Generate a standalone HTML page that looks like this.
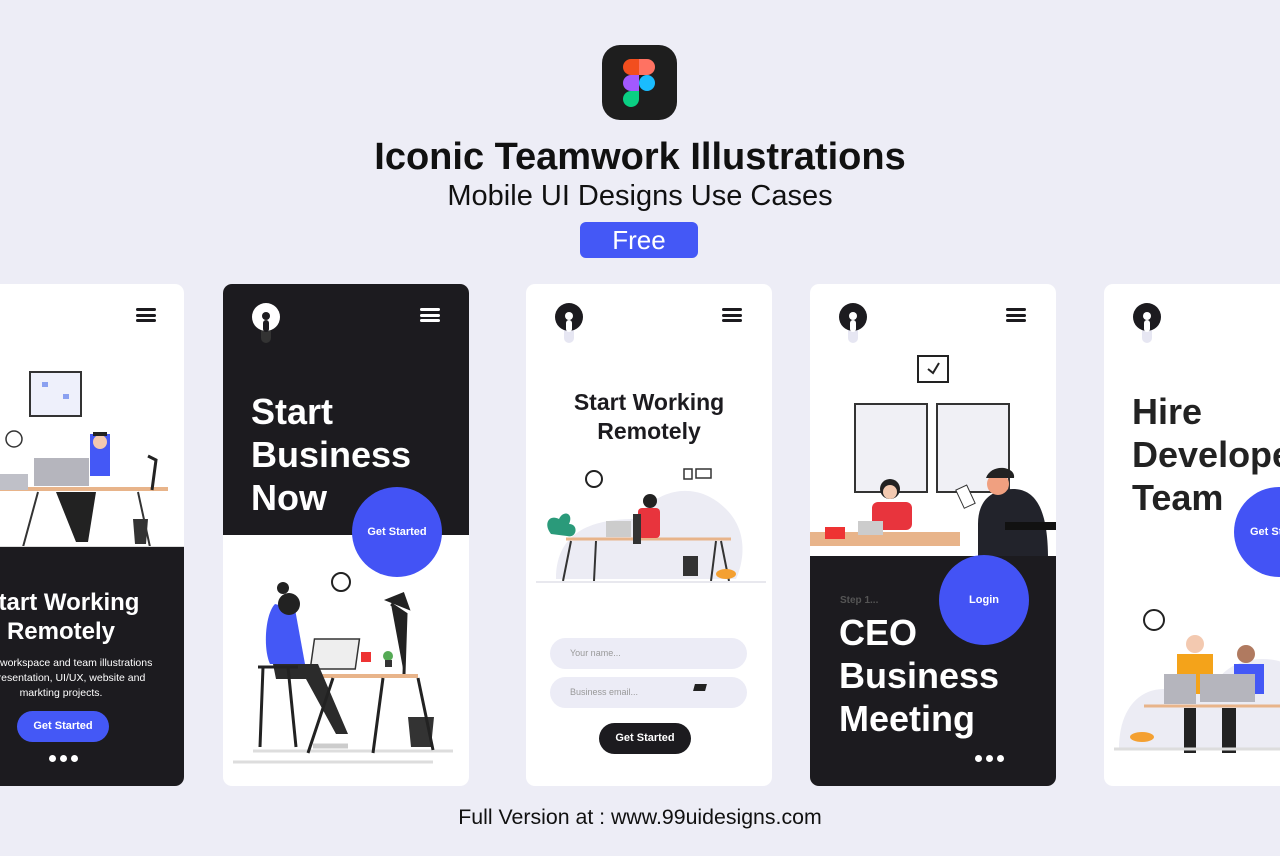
<!DOCTYPE html>
<html><head><meta charset="utf-8"><style>
*{margin:0;padding:0;box-sizing:border-box}
body{width:1280px;height:856px;background:#ededf6;font-family:"Liberation Sans",Arial,sans-serif;position:relative;overflow:hidden}
.abs{position:absolute}
.card{position:absolute;top:284px;width:246px;height:502px;background:#fff;border-radius:9px;overflow:hidden}
.dark{background:#1c1b1f}
.hb{position:absolute;top:24px;width:20px;height:14px}
.hb i{display:block;height:3px;border-radius:2px;margin-bottom:2.5px}
.t{position:absolute;font-weight:700;white-space:nowrap}
.circ{position:absolute;border-radius:50%;background:#4353f5;color:#fff;font-weight:700;font-size:11px;display:flex;align-items:center;justify-content:center}
.dots{position:absolute;display:flex;gap:4px}
.dots i{width:7px;height:7px;border-radius:50%;background:#fff;display:block}
</style></head><body>

<div class="abs" style="left:602px;top:45px;width:75px;height:75px;background:#1e1e1e;border-radius:18px"></div>
<svg class="abs" style="left:622px;top:59px" width="34" height="48" viewBox="0 0 34 48">
<path d="M9 0h8v16H9a8 8 0 0 1 0-16z" fill="#f24e1e"/><path d="M17 0h8a8 8 0 0 1 0 16h-8z" fill="#ff7262"/>
<path d="M9 16h8v16H9a8 8 0 0 1 0-16z" fill="#a259ff"/><circle cx="25" cy="24" r="8" fill="#1abcfe"/>
<path d="M9 32h8v8a8 8 0 1 1-8-8z" fill="#0acf83"/></svg>
<div class="t" style="left:0;width:1280px;text-align:center;top:136px;font-size:38px;color:#111">Iconic Teamwork Illustrations</div>
<div class="abs" style="left:0;width:1280px;text-align:center;top:180px;font-size:29px;color:#111">Mobile UI Designs Use Cases</div>
<div class="abs" style="left:580px;top:222px;width:118px;height:36px;background:#4458f6;border-radius:6px;color:#fff;font-size:26px;text-align:center;line-height:36px">Free</div>
<div class="abs" style="left:0;width:1280px;text-align:center;top:805px;font-size:21.3px;color:#111">Full Version at : www.99uidesigns.com</div>

<!-- card1 -->
<div class="card" style="left:-62px">
 <div class="hb" style="left:198px"><i style="background:#1c1b1f"></i><i style="background:#1c1b1f"></i><i style="background:#1c1b1f"></i></div>
 <svg class="abs" style="left:0;top:80px" width="246" height="190">
  <rect x="92" y="8" width="51" height="44" fill="#eef0fb" stroke="#333" stroke-width="2"/>
  <rect x="104" y="18" width="6" height="5" fill="#8aa0f0"/><rect x="125" y="30" width="6" height="5" fill="#8aa0f0"/>
  <circle cx="76" cy="75" r="8" fill="#fff" stroke="#333" stroke-width="1.5"/>
  <path d="M0 125 h230" stroke="#e8b48a" stroke-width="4"/>
  <rect x="96" y="94" width="55" height="28" fill="#b5b5bd"/>
  <rect x="60" y="110" width="30" height="16" fill="#bfc0c8"/>
  <rect x="152" y="70" width="20" height="42" fill="#4458f6"/>
  <circle cx="162" cy="78" r="7" fill="#f3c9b0"/><path d="M155 72h14v-4h-14z" fill="#222"/>
  <path d="M118 128h40l-8 50h-12z" fill="#222"/>
  <path d="M210 92l8 4-4 30" stroke="#222" stroke-width="3" fill="none"/>
  <path d="M195 155h15l-2 25h-11z" fill="#333"/>
  <path d="M100 128l-15 55M200 128l12 55" stroke="#333" stroke-width="2"/>
  <path d="M0 184h246" stroke="#ddd" stroke-width="4"/>
 </svg>
 <div class="dark abs" style="left:0;top:263px;width:246px;height:239px"></div>
 <div class="t" style="left:0;width:246px;text-align:center;top:304px;font-size:24px;color:#fff;line-height:29px">Start Working<br>Remotely</div>
 <div class="abs" style="left:0;width:246px;text-align:center;top:372px;font-size:10.5px;color:#fff;line-height:15px">Clean workspace and team illustrations<br>for presentation, UI/UX, website and<br>markting projects.</div>
 <div class="abs" style="left:79px;top:427px;width:92px;height:31px;border-radius:16px;background:#4458f6;color:#fff;font-weight:700;font-size:11px;text-align:center;line-height:31px">Get Started</div>
 <div class="dots" style="left:111px;top:471px"><i></i><i></i><i></i></div>
</div>

<!-- card2 -->
<div class="card" style="left:223px">
 <div class="dark abs" style="left:0;top:0;width:246px;height:251px"></div>
 <svg class="abs" style="left:28px;top:19px" width="32" height="42"><rect x="10" y="12" width="10" height="28" rx="5" fill="#333"/><circle cx="15" cy="14" r="14" fill="#fff"/><circle cx="15" cy="13" r="4" fill="#1c1b1f"/><rect x="12" y="17" width="6" height="12" rx="3" fill="#1c1b1f"/></svg>
 <div class="hb" style="left:197px"><i style="background:#fff"></i><i style="background:#fff"></i><i style="background:#fff"></i></div>
 <div class="t" style="left:28px;top:106px;font-size:36px;color:#fff;line-height:43px">Start<br>Business<br>Now</div>
 <svg class="abs" style="left:0;top:280px" width="246" height="222">
  <circle cx="118" cy="18" r="9" fill="#fff" stroke="#222" stroke-width="2"/>
  <path d="M30 187h200M10 198h200" stroke="#ddd" stroke-width="3"/>
  <path d="M90 112h105" stroke="#e8b48a" stroke-width="4"/>
  <rect x="102" y="75" width="45" height="30" fill="#eee" stroke="#333" stroke-width="1.5" transform="skewX(-8)"/>
  <rect x="138" y="88" width="10" height="10" fill="#e33"/>
  <circle cx="165" cy="92" r="5" fill="#5a5"/><rect x="162" y="96" width="7" height="7" fill="#333"/>
  <path d="M168 40l15 10 -2 60M165 36l15 -6 5 14z" stroke="#222" stroke-width="3" fill="#222"/>
  <path d="M185 153h26l-3 30h-20z" fill="#333"/>
  <path d="M52 40c-10 10-12 45-5 60h35l-10-55z" fill="#4458f6"/>
  <circle cx="66" cy="40" r="11" fill="#222"/><circle cx="60" cy="24" r="6" fill="#222"/>
  <path d="M50 100h45l30 70h-12l-30-55h-30z" fill="#2b2b2b"/>
  <path d="M35 103h40M40 103l-3 80M65 103l8 80M110 114l-25 75M160 114l-10 75M195 114l15 72" stroke="#222" stroke-width="3"/>
  <path d="M90 182h35" stroke="#ccc" stroke-width="5"/>
 </svg>
 <div class="circ" style="left:129px;top:203px;width:90px;height:90px">Get Started</div>
</div>

<!-- card3 -->
<div class="card" style="left:526px">
 <svg class="abs" style="left:28px;top:19px" width="32" height="42"><rect x="10" y="12" width="10" height="28" rx="5" fill="#e6e6f2"/><circle cx="15" cy="14" r="14" fill="#1c1b1f"/><circle cx="15" cy="13" r="4" fill="#fff"/><rect x="12" y="17" width="6" height="12" rx="3" fill="#fff"/></svg>
 <div class="hb" style="left:196px"><i style="background:#1c1b1f"></i><i style="background:#1c1b1f"></i><i style="background:#1c1b1f"></i></div>
 <div class="t" style="left:0;width:246px;text-align:center;top:104px;font-size:23px;color:#1c1b1f;line-height:29px">Start Working<br>Remotely</div>
 <svg class="abs" style="left:0;top:180px" width="246" height="130">
  <path d="M30 115c0-50 40-60 80-60c20-30 60-40 90-10c30 30 10 70 10 70z" fill="#ececf4"/>
  <circle cx="68" cy="15" r="8" fill="#fff" stroke="#222" stroke-width="2"/>
  <rect x="158" y="5" width="8" height="10" fill="#fff" stroke="#333" stroke-width="1.5"/><rect x="170" y="5" width="15" height="9" fill="#fff" stroke="#333" stroke-width="1.5"/>
  <path d="M40 75h165" stroke="#e8b48a" stroke-width="3"/>
  <rect x="80" y="57" width="25" height="16" fill="#ccc"/>
  <rect x="112" y="44" width="22" height="30" rx="4" fill="#e8343d"/><circle cx="124" cy="37" r="7" fill="#222"/>
  <path d="M45 77l-8 40M190 77l-5 40M195 77l8 40M70 77l-2 40" stroke="#333" stroke-width="2"/>
  <rect x="107" y="50" width="8" height="30" fill="#333"/>
  <path d="M25 70c-8-10-2-20 8-15c5-10 15-5 10 5c10 0 8 15-2 12z" fill="#2a9a7a"/>
  <rect x="157" y="92" width="15" height="20" fill="#333"/><ellipse cx="200" cy="110" rx="10" ry="5" fill="#f4a031"/>
  <path d="M10 118h230" stroke="#e8e8ee" stroke-width="2"/>
 </svg>
 <div class="abs" style="left:24px;top:354px;width:197px;height:31px;border-radius:16px;background:#ececf6;font-size:9px;color:#999;line-height:31px;padding-left:20px">Your name...</div>
 <div class="abs" style="left:24px;top:393px;width:197px;height:31px;border-radius:16px;background:#ececf6;font-size:9px;color:#999;line-height:31px;padding-left:20px">Business email...</div>
 <div class="abs" style="left:168px;top:400px;width:12px;height:7px;background:#222;transform:skewX(-15deg)"></div>
 <div class="abs" style="left:73px;top:439px;width:92px;height:31px;border-radius:16px;background:#1c1b1f;color:#fff;font-weight:700;font-size:11px;text-align:center;line-height:31px">Get Started</div>
</div>

<!-- card4 -->
<div class="card" style="left:810px">
 <svg class="abs" style="left:28px;top:19px" width="32" height="42"><rect x="10" y="12" width="10" height="28" rx="5" fill="#e6e6f2"/><circle cx="15" cy="14" r="14" fill="#1c1b1f"/><circle cx="15" cy="13" r="4" fill="#fff"/><rect x="12" y="17" width="6" height="12" rx="3" fill="#fff"/></svg>
 <div class="hb" style="left:196px"><i style="background:#1c1b1f"></i><i style="background:#1c1b1f"></i><i style="background:#1c1b1f"></i></div>
 <svg class="abs" style="left:0;top:60px" width="246" height="215">
  <rect x="108" y="12" width="30" height="26" fill="#fff" stroke="#222" stroke-width="2"/><path d="M118 25l5 4 6-10" stroke="#222" stroke-width="2" fill="none"/>
  <rect x="45" y="60" width="72" height="88" fill="#f0f0f5" stroke="#333" stroke-width="2"/>
  <rect x="127" y="60" width="72" height="88" fill="#f0f0f5" stroke="#333" stroke-width="2"/>
  <path d="M0 195h150" stroke="#e8b48a" stroke-width="14"/>
  <rect x="62" y="158" width="40" height="28" rx="6" fill="#e8343d"/><circle cx="80" cy="145" r="10" fill="#222"/><circle cx="80" cy="148" r="7" fill="#f3c9b0"/>
  <rect x="48" y="177" width="25" height="14" fill="#ccc"/><rect x="15" y="183" width="20" height="12" fill="#e33"/>
  <path d="M168 180c0-25 15-35 35-35c25 0 35 25 35 70h-70z" fill="#22232b"/>
  <circle cx="188" cy="140" r="11" fill="#f0a080"/><path d="M176 134c5-15 30-12 28 0z" fill="#222"/>
  <rect x="150" y="143" width="12" height="20" fill="#fff" stroke="#333" transform="rotate(-25 155 154)"/>
  <path d="M195 182h51" stroke="#111" stroke-width="8"/>
 </svg>
 <div class="dark abs" style="left:0;top:272px;width:246px;height:230px"></div>
 <div class="abs" style="left:30px;top:311px;font-size:10px;color:#555;font-weight:700">Step 1...</div>
 <div class="t" style="left:29px;top:327px;font-size:36px;color:#fff;line-height:43px">CEO<br>Business<br>Meeting</div>
 <div class="circ" style="left:129px;top:271px;width:90px;height:90px">Login</div>
 <div class="dots" style="left:165px;top:471px"><i></i><i></i><i></i></div>
</div>

<!-- card5 -->
<div class="card" style="left:1104px;width:200px">
 <svg class="abs" style="left:28px;top:19px" width="32" height="42"><rect x="10" y="12" width="10" height="28" rx="5" fill="#e6e6f2"/><circle cx="15" cy="14" r="14" fill="#1c1b1f"/><circle cx="15" cy="13" r="4" fill="#fff"/><rect x="12" y="17" width="6" height="12" rx="3" fill="#fff"/></svg>
 <div class="t" style="left:28px;top:106px;font-size:36px;color:#222;line-height:43px">Hire<br>Developer<br>Team</div>
 <div class="circ" style="left:130px;top:203px;width:90px;height:90px;justify-content:flex-start;padding-left:16px">Get Started</div>
 <svg class="abs" style="left:0;top:320px" width="200" height="160">
  <path d="M15 145c0-40 20-60 45-60h50c10-40 90-40 90 0v60z" fill="#ececf4"/>
  <circle cx="50" cy="16" r="10" fill="#fff" stroke="#222" stroke-width="2"/>
  <rect x="73" y="50" width="36" height="40" fill="#f4a31a"/><circle cx="91" cy="40" r="9" fill="#f3c9b0"/>
  <rect x="130" y="60" width="30" height="30" fill="#4458f6"/><circle cx="142" cy="50" r="9" fill="#b07a60"/>
  <rect x="60" y="70" width="32" height="30" fill="#b5b5bd"/><rect x="96" y="70" width="55" height="28" fill="#b5b5bd"/>
  <path d="M40 132h160" stroke="#e8b48a" stroke-width="3" transform="translate(0,-30)"/>
  <rect x="80" y="104" width="12" height="45" fill="#222"/><rect x="118" y="104" width="14" height="45" fill="#222"/>
  <ellipse cx="38" cy="133" rx="12" ry="5" fill="#f4a031"/>
  <path d="M10 145h190" stroke="#ddd" stroke-width="3"/>
 </svg>
</div>
</body></html>
